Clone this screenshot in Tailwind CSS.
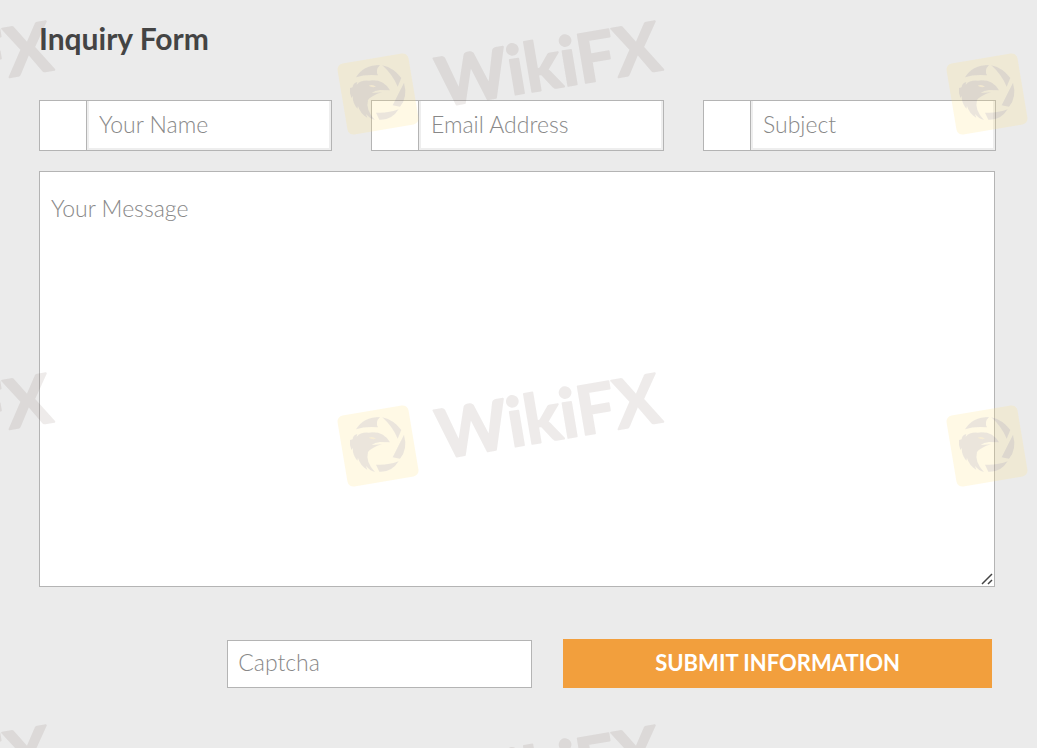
<!DOCTYPE html>
<html lang="en">
<head>
  <meta charset="UTF-8">
  <meta name="viewport" content="width=device-width, initial-scale=1.0">
  <title>Inquiry Form</title>
  <script src="https://cdn.jsdelivr.net/npm/@tailwindcss/browser@4"></script>
</head>
<body class="relative min-h-screen overflow-hidden bg-[#ebebeb] font-['Lato',sans-serif] text-[#444]">
  <main class="pt-[18px] pr-[41px] pb-[60px] pl-[39px]">
    <h1 class="text-[30px] leading-10 font-bold">Inquiry Form</h1>

    <form class="mt-[42px]">
      <div class="grid grid-cols-3 gap-[39px]">
        <div class="flex h-[51px] border border-[#b4b4b4] bg-white">
          <span class="w-[47px] shrink-0 border-r border-[#b4b4b4]"></span>
          <input id="name" type="text" placeholder="Your Name" aria-label="Your Name" class="w-full min-w-0 border-2 border-t-0 border-[#eee] px-[10px] pb-px text-[23px] font-light outline-none placeholder:text-[#888]">
        </div>
        <div class="flex h-[51px] border border-[#b4b4b4] bg-white">
          <span class="w-[47px] shrink-0 border-r border-[#b4b4b4]"></span>
          <input id="email" type="email" placeholder="Email Address" aria-label="Email Address" class="w-full min-w-0 border-2 border-t-0 border-[#eee] px-[10px] pb-px text-[23px] font-light outline-none placeholder:text-[#888]">
        </div>
        <div class="flex h-[51px] border border-[#b4b4b4] bg-white">
          <span class="w-[47px] shrink-0 border-r border-[#b4b4b4]"></span>
          <input id="subject" type="text" placeholder="Subject" aria-label="Subject" class="w-full min-w-0 border-2 border-t-0 border-[#eee] px-[10px] pb-px text-[23px] font-light outline-none placeholder:text-[#888]">
        </div>
      </div>

      <div class="relative mt-5 mr-px">
        <textarea id="message" placeholder="Your Message" aria-label="Your Message" class="block h-[416px] w-full resize-none border border-[#b4b4b4] bg-white px-[11px] py-5 text-[23px] leading-8 font-light outline-none placeholder:text-[#888]"></textarea>
        <svg class="pointer-events-none absolute right-[2px] bottom-[2px] h-3 w-3" viewBox="0 0 12 12" fill="none" stroke="#444" stroke-width="1.5" aria-hidden="true">
          <path d="M1 11L11 1M7 11L11 7"/>
        </svg>
      </div>

      <div class="mt-[52px] flex items-end justify-end gap-[31px] pr-1">
        <input id="captcha" type="text" placeholder="Captcha" aria-label="Captcha" class="h-12 w-[32%] border border-[#b4b4b4] bg-white px-[10px] pb-1 text-[23px] font-light outline-none placeholder:text-[#888]">
        <button type="submit" class="h-[49px] w-[45%] bg-[#f29f3d] pb-0.5 text-[22px] font-bold text-white">SUBMIT INFORMATION</button>
      </div>
    </form>
  </main>

  <!-- Repeating watermark -->
  <svg class="pointer-events-none absolute inset-0 h-full w-full" aria-hidden="true">
    <defs>
      <pattern id="mark" x="330" y="0" width="609" height="352" patternUnits="userSpaceOnUse">
        <rect x="12" y="58" width="72" height="72" rx="6" transform="rotate(-9.5 48 94)" fill="#ffe17d" fill-opacity=".2"/>
        <g transform="translate(0 8) scale(.3333)" fill="#3c3c96" fill-opacity=".1">
          <path d="M78 208Q100 171 150 171Q135 186 144 202Q108 198 78 208z"/>
          <path d="M157 172Q192 180 214 210L203 236Q188 200 157 172z"/>
          <path d="M222 224Q234 268 210 296L188 292z"/>
          <path d="M138 314Q176 316 206 304Q185 338 148 335z"/>
          <path d="M60 240L68 238Q68 226 82 222L80 230Q92 216 116 218Q160 212 180 247L150 246Q135 248 125 255L156 253Q126 262 114 276Q106 306 135 336Q122 334 108 318L112 330Q90 316 84 294L82 302Q68 286 68 264L64 270Q58 254 60 240z"/>
          <path d="M116 233Q128 228 138 236Q126 240 116 233z" fill="#fff4d0" fill-opacity=".6"/>
        </g>
        <text x="111" y="107" transform="rotate(-9.5 111 107)" font-family="Lato" font-weight="700" font-size="68" fill="#3c1e14" stroke="#3c1e14" stroke-width="2" stroke-linejoin="round" opacity=".09">WikiFX</text>
      </pattern>
    </defs>
    <rect width="100%" height="100%" fill="url(#mark)"/>
  </svg>
</body>
</html>
